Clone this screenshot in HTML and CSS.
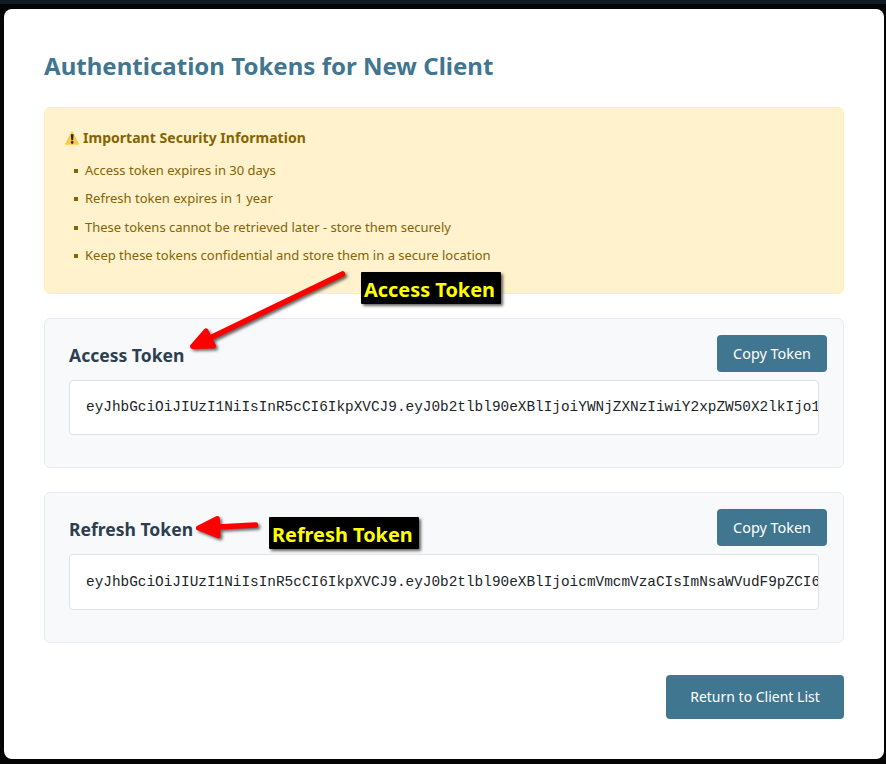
FILE: index.html
```html
<!DOCTYPE html>
<html lang="en">
<head>
<meta charset="utf-8">
<title>Authentication Tokens for New Client</title>
<link rel="stylesheet" href="styles.css">
</head>
<body>
<main class="card">
  <h1 class="title">Authentication Tokens for New Client</h1>
  <section class="notice">
    <h2 class="notice-title">
      <svg class="warning" viewBox="0 0 14 14" aria-hidden="true"><path d="M7 1.2 13.2 13H.8Z" fill="#ffc84a" stroke="#ffc84a" stroke-width="1.4" stroke-linejoin="round"/><path d="M5.800 3.200h2.800L8.100 9.300H6.300Z" fill="#222b30"/><circle cx="7.200" cy="11.400" r="1.300" fill="#222b30"/></svg>
      <span>Important Security Information</span>
    </h2>
    <ul class="notice-list">
      <li>Access token expires in 30 days</li>
      <li>Refresh token expires in 1 year</li>
      <li>These tokens cannot be retrieved later - store them securely</li>
      <li>Keep these tokens confidential and store them in a secure location</li>
    </ul>
  </section>
  <section class="token">
    <header class="token-head">
      <h2 class="token-title">Access Token</h2>
      <button class="button copy">Copy Token</button>
    </header>
    <div class="token-value">eyJhbGciOiJIUzI1NiIsInR5cCI6IkpXVCJ9.eyJ0b2tlbl90eXBlIjoiYWNjZXNzIiwiY2xpZW50X2lkIjo1</div>
  </section>
  <section class="token">
    <header class="token-head">
      <h2 class="token-title">Refresh Token</h2>
      <button class="button copy">Copy Token</button>
    </header>
    <div class="token-value">eyJhbGciOiJIUzI1NiIsInR5cCI6IkpXVCJ9.eyJ0b2tlbl90eXBlIjoicmVmcmVzaCIsImNsaWVudF9pZCI6</div>
  </section>
  <footer class="actions">
    <button class="button return">Return to Client List</button>
  </footer>
</main>
<svg class="arrows" viewBox="0 0 886 764" aria-hidden="true">
  <g fill="#f00" stroke="#f00" stroke-linecap="round" stroke-linejoin="round">
    <path d="M342.5 274 208 339" stroke-width="5.6"/>
    <path d="M192.500 346.500 206 331 213.500 346Z" stroke-width="5"/>
    <path d="M255.500 525 214 527.200" stroke-width="5.600"/>
    <path d="M198.500 528 217.300 518.500 218 535.800Z" stroke-width="5"/>
  </g>
</svg>
<div class="label label-access">Access Token</div>
<div class="label label-refresh">Refresh Token</div>
</body>
</html>
```
FILE: styles.css
```css
* { box-sizing: border-box; }

body {
  margin: 0;
  height: 764px;
  padding: 5px 2px 5px 4px;
  overflow: hidden;
  background: #050505;
  border-top: 4px solid #101d25;
  font-family: "Noto Sans", sans-serif;
}

h1, h2, ul { margin: 0; padding: 0; }

.card {
  height: 750px;
  padding: 40px;
  background: #fff;
  border-radius: 8px;
}

.title {
  font-size: 24px;
  letter-spacing: .02px;
  line-height: 34px;
  font-weight: 700;
  color: #417690;
}

.notice {
  height: 187px;
  margin-top: 24px;
  padding: 20px;
  background: #fff2cd;
  border: 1px solid #ffeeba;
  border-radius: 6px;
  color: #856404;
}

.notice-title {
  display: flex;
  align-items: center;
  gap: 4px;
  font-size: 14px;
  letter-spacing: .03px;
  line-height: 20px;
  font-weight: 700;
}

.warning { width: 14px; height: 14px; }

.notice-list {
  margin-top: 8px;
  padding-left: 9px;
  list-style: none;
  font-size: 13px;
}

.notice-list li {
  display: flex;
  align-items: center;
  gap: 7px;
  line-height: 28.4px;
}

.notice-list li::before {
  content: "";
  width: 4px;
  height: 4px;
  margin-top: 1px;
  background: currentColor;
}

.token {
  height: 150px;
  margin-top: 24px;
  padding: 16px 24px;
  background: #f8f9fb;
  border: 1px solid #e9ecef;
  border-radius: 6px;
}

.token + .token { height: 151px; }
.token + .token .token-value { height: 56px; line-height: 54px; }

.token-head {
  display: flex;
  justify-content: space-between;
  height: 45px;
  margin-right: -8px;
}

.token-title {
  padding-top: 8px;
  font-size: 17.55px;
  line-height: 24px;
  font-weight: 700;
  color: #2c3e50;
}

.button {
  border: 0;
  border-radius: 4px;
  background: #417690;
  color: #fff;
  font-family: inherit;
  font-size: 14.4px;
  padding: 0;
}

.copy { width: 110px; height: 37px; }

.token-value {
  height: 55px;
  padding: 0 16px;
  overflow: hidden;
  white-space: nowrap;
  background: #fff;
  border: 1px solid #dee2e6;
  border-radius: 4px;
  font-family: "Liberation Mono", monospace;
  font-size: 14.4px;
  line-height: 52px;
  color: #212529;
}

.actions {
  display: flex;
  justify-content: flex-end;
  margin-top: 32px;
}

.return {
  width: 178px;
  height: 44px;
  padding-bottom: 2px;
  font-size: 14px;
}

.arrows {
  position: absolute;
  inset: 0;
  width: 886px;
  height: 764px;
  filter: drop-shadow(2px 2px 1.5px rgba(0, 0, 0, .6));
  pointer-events: none;
}

.label {
  position: absolute;
  height: 32px;
  padding-left: 3px;
  background: #000;
  color: #ff0;
  font-size: 19.9px;
  line-height: 35px;
  font-weight: 700;
  white-space: nowrap;
  border-radius: 1px;
  box-shadow: 2px 2px 3px rgba(0, 0, 0, .6);
}

.label-access { left: 361px; top: 272px; width: 140px; }
.label-refresh { left: 269px; top: 517px; width: 150px; }
```
